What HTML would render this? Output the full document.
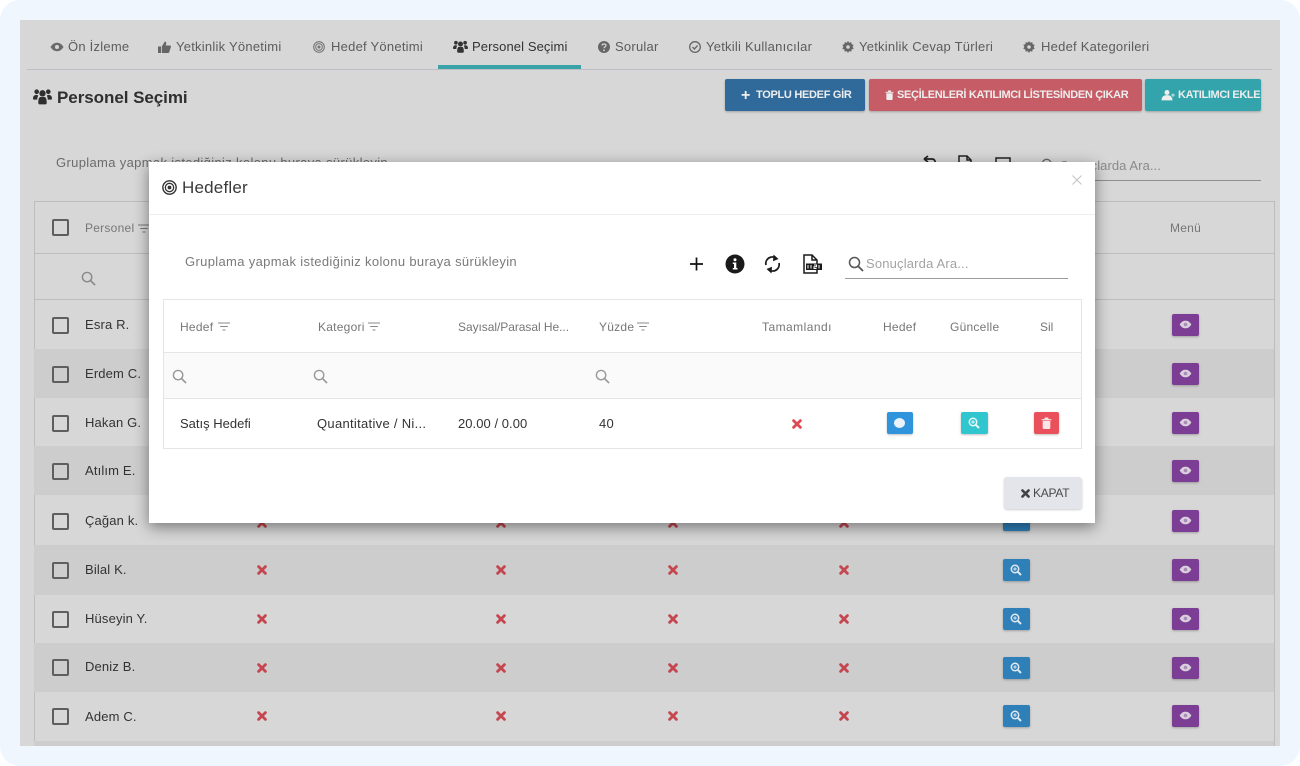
<!DOCTYPE html>
<html lang="tr"><head><meta charset="utf-8"><title>Hedefler</title>
<style>
*{box-sizing:border-box}
html,body{margin:0;padding:0;width:1300px;height:766px;overflow:hidden;background:#fff;font-family:"Liberation Sans",sans-serif}
.frame{position:absolute;left:0;top:0;width:1300px;height:766px;background:#eff6fe;border-radius:20px;overflow:hidden}
.app{position:absolute;left:20px;top:20px;width:1260px;height:726px;background:#d7d7d7;overflow:hidden}
.t{position:absolute;white-space:nowrap;line-height:16px}
.a{position:absolute}
svg.a{overflow:visible}
.tab{font-size:13px;color:#5c5c5c;letter-spacing:.24px}
.row{position:absolute;left:14px;width:1240px}
.cb{position:absolute;left:32px;width:17px;height:17px;border:2px solid #5e5e5e;border-radius:2px;background:transparent}
.nm{font-size:13px;color:#333;left:65px;letter-spacing:.15px}
.x{position:absolute;font-size:0;width:10px;height:10px}
.btn{position:absolute;height:32px;border-radius:2px;color:#eee;font-size:11px;font-weight:bold;line-height:33px;white-space:nowrap;box-shadow:0 1px 2px rgba(0,0,0,.25)}
.sq{position:absolute;width:27px;height:22px;border-radius:2px;box-shadow:0 1px 2px rgba(0,0,0,.25)}
.blue{background:#2f7fb8}.pur{background:#7c3e94}
.modal{position:absolute;left:149px;top:162px;width:946px;height:361px;background:#fff;box-shadow:0 4px 14px rgba(0,0,0,.45)}
.h{font-size:12px;color:#777;letter-spacing:.25px}
.c{font-size:13px;color:#333}
</style></head><body>
<svg width="0" height="0" style="position:absolute">
<defs>
<symbol id="x" viewBox="0 0 10 10"><path d="M1.600 1.600 8.400 8.400M8.400 1.600 1.600 8.400" stroke="currentColor" stroke-width="2.800" stroke-linecap="round" fill="none"/></symbol>
<symbol id="mag" viewBox="0 0 16 16"><circle cx="6.500" cy="6.500" r="5" fill="none" stroke="currentColor" stroke-width="1.500"/><path d="M10.200 10.200 15 15" stroke="currentColor" stroke-width="1.800" fill="none"/></symbol>
<symbol id="fil" viewBox="0 0 12 9"><path d="M0 1h12M2.200 4.500h7.600M4.500 8h3" stroke="currentColor" stroke-width="1.100" fill="none"/></symbol>
<symbol id="zoom" viewBox="0 0 12 12"><circle cx="5" cy="5" r="3.700" fill="none" stroke="currentColor" stroke-width="1.500"/><path d="M7.800 7.800 11 11" stroke="currentColor" stroke-width="2" fill="none"/><path d="M3.200 5h3.600M5 3.200v3.600" stroke="currentColor" stroke-width="1"/></symbol>
<symbol id="eye" viewBox="0 0 14 10"><path d="M.5 5C2.500 1.800 4.600 .8 7 .8S11.500 1.800 13.500 5C11.500 8.200 9.400 9.200 7 9.200S2.500 8.200 .5 5Z" fill="currentColor"/><circle cx="7" cy="5" r="2" style="fill:var(--p,#a98bb5)"/></symbol>
<symbol id="users" viewBox="0 0 18 15"><circle cx="3.500" cy="3" r="2.200" fill="currentColor"/><circle cx="14.500" cy="3" r="2.200" fill="currentColor"/><circle cx="9" cy="4.500" r="3" fill="currentColor"/><path d="M0 9.500C0 7 1.500 6 3.500 6L5 6.500C4.500 7.500 4 9 4 10.500H1C.4 10.500 0 10 0 9.500ZM18 9.500C18 7 16.500 6 14.500 6L13 6.500C13.500 7.500 14 9 14 10.500H17C17.600 10.500 18 10 18 9.500ZM5 13.500C5 9.500 6 8 7 8H11C12 8 13 9.500 13 13.500C13 14.400 12.400 15 11.500 15H6.500C5.600 15 5 14.400 5 13.500Z" fill="currentColor"/></symbol>
<symbol id="tgt" viewBox="0 0 14 14"><circle cx="7" cy="7" r="6.200" fill="none" stroke="currentColor" stroke-width="1.300"/><circle cx="7" cy="7" r="3.900" fill="none" stroke="currentColor" stroke-width="1.200"/><circle cx="7" cy="7" r="1.800" fill="currentColor"/></symbol>
<symbol id="gear" viewBox="0 0 12 12"><path d="M6 0 7.200 1.800 9.300 1.100 9.600 3.200 11.700 3.900 10.600 5.800 11.700 7.800 9.600 8.500 9.300 10.600 7.200 10.100 6 12 4.800 10.100 2.700 10.600 2.400 8.500.3 7.800 1.400 5.800.3 3.900 2.400 3.200 2.700 1.100 4.800 1.800Z" fill="currentColor"/><circle cx="6" cy="6" r="1.800" fill="#d7d7d7"/></symbol>
<symbol id="trash" viewBox="0 0 10 11"><path d="M.5 2h9v1H.5ZM3.500 .5h3l.5 1.500H3ZM1.500 3.500h7V10c0 .5-.4 1-1 1h-5c-.6 0-1-.5-1-1Z" fill="currentColor"/></symbol>
</defs></svg>
<div class="frame">
<div class="app">
<!-- tabs -->
<svg class="a" style="left:30px;top:22px;color:#6a6a6a;--p:#d7d7d7" width="14" height="10"><use href="#eye"/></svg>
<div class="t tab" style="left:48px;top:19px">Ön İzleme</div>
<svg class="a" style="left:138px;top:21px" width="13" height="12" viewBox="0 0 13 12"><path d="M0 5.500h3V12H0ZM3.800 5.500 6.500 1C7.600.2 8.500 1 8.200 2.500L7.700 4.500H12C13 4.500 13.200 5.500 12.800 6.200L11.200 11.300C11 11.800 10.600 12 10 12H3.800Z" fill="#666"/></svg>
<div class="t tab" style="left:156px;top:19px">Yetkinlik Yönetimi</div>
<svg class="a" style="left:293px;top:21px;color:#777" width="12" height="12"><use href="#tgt"/></svg>
<div class="t tab" style="left:311px;top:19px">Hedef Yönetimi</div>
<svg class="a" style="left:433px;top:20px;color:#333" width="15" height="13"><use href="#users"/></svg>
<div class="t tab" style="left:452px;top:19px;color:#333;letter-spacing:.1px">Personel Seçimi</div>
<svg class="a" style="left:578px;top:21px" width="12" height="12" viewBox="0 0 12 12"><circle cx="6" cy="6" r="6" fill="#666"/><path d="M4 4.500C4 2.500 8 2.500 8 4.500 8 6 6 5.800 6 7.300" stroke="#d7d7d7" stroke-width="1.200" fill="none"/><circle cx="6" cy="9.300" r=".9" fill="#d7d7d7"/></svg>
<div class="t tab" style="left:595px;top:19px">Sorular</div>
<svg class="a" style="left:669px;top:21px" width="12" height="12" viewBox="0 0 12 12"><circle cx="6" cy="6" r="5.300" fill="none" stroke="#666" stroke-width="1.300"/><path d="M3.500 6 5.400 8 8.600 4.500" fill="none" stroke="#666" stroke-width="1.300"/></svg>
<div class="t tab" style="left:686px;top:19px">Yetkili Kullanıcılar</div>
<svg class="a" style="left:822px;top:21px;color:#666" width="12" height="12"><use href="#gear"/></svg>
<div class="t tab" style="left:839px;top:19px">Yetkinlik Cevap Türleri</div>
<svg class="a" style="left:1003px;top:21px;color:#666" width="12" height="12"><use href="#gear"/></svg>
<div class="t tab" style="left:1021px;top:19px">Hedef Kategorileri</div>
<div class="a" style="left:7px;top:49px;width:1245px;height:1px;background:#bebec6"></div>
<div class="a" style="left:418px;top:45px;width:143px;height:4px;background:#3aa3a8"></div>
<!-- title -->
<svg class="a" style="left:13px;top:68px;color:#2f2f2f" width="19" height="17"><use href="#users"/></svg>
<div class="t" style="left:37px;top:69px;font-size:17px;font-weight:bold;color:#2f2f2f;line-height:18px;letter-spacing:-.05px">Personel Seçimi</div>
<!-- buttons -->
<div class="btn" style="left:705px;top:59px;width:140px;background:#306a9a;padding-left:31px;letter-spacing:-.3px"><span class="a" style="left:16px;top:0;font-size:16px">+</span>TOPLU HEDEF GİR</div>
<div class="btn" style="left:849px;top:59px;width:273px;background:#c65d66;padding-left:28px;letter-spacing:-.33px"><svg class="a" style="left:16px;top:11px;color:#eee" width="9" height="10"><use href="#trash"/></svg>SEÇİLENLERİ KATILIMCI LİSTESİNDEN ÇIKAR</div>
<div class="btn" style="left:1125px;top:59px;width:116px;background:#33a4ab;padding-left:33px;letter-spacing:-.35px"><svg class="a" style="left:17px;top:11px" width="13" height="10" viewBox="0 0 13 10"><circle cx="5" cy="2.500" r="2.500" fill="#eee"/><path d="M0 10C0 6.500 2 5.500 5 5.500S10 6.500 10 10ZM9 5h4M11 3.500v3.500" fill="#eee" stroke="#eee" stroke-width=".8"/></svg>KATILIMCI EKLE</div>
<!-- background toolbar -->
<div class="t" style="left:36px;top:135px;font-size:13px;color:#6b6b6b;letter-spacing:.34px">Gruplama yapmak istediğiniz kolonu buraya sürükleyin</div>
<svg class="a" style="left:903px;top:135px" width="14" height="14"><path d="M1 4 5 1M1 4 5 7M1 4H9C12 4 13 7 12 12" stroke="#222" stroke-width="1.700" fill="none"/></svg>
<svg class="a" style="left:938px;top:135px" width="14" height="14"><path d="M1 1H9L13 5V14H1ZM9 1V5H13" stroke="#222" stroke-width="1.500" fill="none"/></svg>
<svg class="a" style="left:975px;top:137px" width="16" height="12"><rect x="1" y="1" width="14" height="11" fill="none" stroke="#222" stroke-width="1.500"/></svg>
<svg class="a" style="left:1021px;top:138px;color:#666" width="14" height="14"><use href="#mag"/></svg>
<div class="t" style="left:1040px;top:138px;font-size:13px;color:#8a8a8a;letter-spacing:.07px">Sonuçlarda Ara...</div>
<div class="a" style="left:1014px;top:160px;width:227px;height:1px;background:#8f8f8f"></div>
<!-- table -->
<div class="a" style="left:14px;top:181px;width:1241px;height:560px;border:1px solid #bdbdbd;border-bottom:0"></div>
<div class="a" style="left:14px;top:233px;width:1241px;height:1px;background:#bdbdbd"></div>
<div class="a" style="left:14px;top:279px;width:1241px;height:1px;background:#bdbdbd"></div>
<div class="row" style="top:329px;height:49px;background:#cdcdcd"></div>
<div class="row" style="top:426px;height:49px;background:#cdcdcd"></div>
<div class="row" style="top:525px;height:50px;background:#cdcdcd"></div>
<div class="row" style="top:623px;height:49px;background:#cdcdcd"></div>
<div class="row" style="top:721px;height:5px;background:#cdcdcd"></div>

<div class="cb" style="top:199px"></div><div class="t" style="left:65px;top:200px;font-size:12px;color:#777;letter-spacing:.25px">Personel</div>
<svg class="a" style="left:118px;top:204px;color:#777" width="12" height="9"><use href="#fil"/></svg>
<div class="t" style="left:1150px;top:200px;font-size:12px;color:#777;letter-spacing:.25px">Menü</div>
<svg class="a" style="left:61px;top:251px;color:#888" width="15" height="15"><use href="#mag"/></svg>

<div class="cb" style="top:297px"></div><div class="t nm" style="top:297px">Esra R.</div>
<div class="cb" style="top:346px"></div><div class="t nm" style="top:346px">Erdem C.</div>
<div class="cb" style="top:395px"></div><div class="t nm" style="top:395px">Hakan G.</div>
<div class="cb" style="top:443px"></div><div class="t nm" style="top:443px">Atılım E.</div>
<div class="cb" style="top:493px"></div><div class="t nm" style="top:493px">Çağan k.</div>
<div class="cb" style="top:542px"></div><div class="t nm" style="top:542px">Bilal K.</div>
<div class="cb" style="top:591px"></div><div class="t nm" style="top:591px">Hüseyin Y.</div>
<div class="cb" style="top:639px"></div><div class="t nm" style="top:639px">Deniz B.</div>
<div class="cb" style="top:688px"></div><div class="t nm" style="top:689px">Adem C.</div>

<!-- red x marks -->
<svg class="x" style="left:237px;top:498px;color:#c5464f"><use href="#x"/></svg><svg class="x" style="left:476px;top:498px;color:#c5464f"><use href="#x"/></svg><svg class="x" style="left:648px;top:498px;color:#c5464f"><use href="#x"/></svg><svg class="x" style="left:819px;top:498px;color:#c5464f"><use href="#x"/></svg>
<svg class="x" style="left:237px;top:545px;color:#c5464f"><use href="#x"/></svg><svg class="x" style="left:476px;top:545px;color:#c5464f"><use href="#x"/></svg><svg class="x" style="left:648px;top:545px;color:#c5464f"><use href="#x"/></svg><svg class="x" style="left:819px;top:545px;color:#c5464f"><use href="#x"/></svg>
<svg class="x" style="left:237px;top:594px;color:#c5464f"><use href="#x"/></svg><svg class="x" style="left:476px;top:594px;color:#c5464f"><use href="#x"/></svg><svg class="x" style="left:648px;top:594px;color:#c5464f"><use href="#x"/></svg><svg class="x" style="left:819px;top:594px;color:#c5464f"><use href="#x"/></svg>
<svg class="x" style="left:237px;top:643px;color:#c5464f"><use href="#x"/></svg><svg class="x" style="left:476px;top:643px;color:#c5464f"><use href="#x"/></svg><svg class="x" style="left:648px;top:643px;color:#c5464f"><use href="#x"/></svg><svg class="x" style="left:819px;top:643px;color:#c5464f"><use href="#x"/></svg>
<svg class="x" style="left:237px;top:691px;color:#c5464f"><use href="#x"/></svg><svg class="x" style="left:476px;top:691px;color:#c5464f"><use href="#x"/></svg><svg class="x" style="left:648px;top:691px;color:#c5464f"><use href="#x"/></svg><svg class="x" style="left:819px;top:691px;color:#c5464f"><use href="#x"/></svg>

<!-- blue buttons -->
<div class="sq blue" style="left:983px;top:489px"></div>
<div class="sq blue" style="left:983px;top:539px"></div><svg class="a" style="left:990px;top:544px;color:#dfe9f0" width="12" height="12"><use href="#zoom"/></svg>
<div class="sq blue" style="left:983px;top:588px"></div><svg class="a" style="left:990px;top:593px;color:#dfe9f0" width="12" height="12"><use href="#zoom"/></svg>
<div class="sq blue" style="left:983px;top:637px"></div><svg class="a" style="left:990px;top:642px;color:#dfe9f0" width="12" height="12"><use href="#zoom"/></svg>
<div class="sq blue" style="left:983px;top:685px"></div><svg class="a" style="left:990px;top:690px;color:#dfe9f0" width="12" height="12"><use href="#zoom"/></svg>

<!-- purple buttons -->
<div class="sq pur" style="left:1152px;top:294px"></div><svg class="a" style="left:1159px;top:300px;color:#d9cfdd" width="13" height="9"><use href="#eye"/></svg>
<div class="sq pur" style="left:1152px;top:343px"></div><svg class="a" style="left:1159px;top:349px;color:#d9cfdd" width="13" height="9"><use href="#eye"/></svg>
<div class="sq pur" style="left:1152px;top:392px"></div><svg class="a" style="left:1159px;top:398px;color:#d9cfdd" width="13" height="9"><use href="#eye"/></svg>
<div class="sq pur" style="left:1152px;top:440px"></div><svg class="a" style="left:1159px;top:446px;color:#d9cfdd" width="13" height="9"><use href="#eye"/></svg>
<div class="sq pur" style="left:1152px;top:490px"></div><svg class="a" style="left:1159px;top:496px;color:#d9cfdd" width="13" height="9"><use href="#eye"/></svg>
<div class="sq pur" style="left:1152px;top:539px"></div><svg class="a" style="left:1159px;top:545px;color:#d9cfdd" width="13" height="9"><use href="#eye"/></svg>
<div class="sq pur" style="left:1152px;top:588px"></div><svg class="a" style="left:1159px;top:594px;color:#d9cfdd" width="13" height="9"><use href="#eye"/></svg>
<div class="sq pur" style="left:1152px;top:637px"></div><svg class="a" style="left:1159px;top:643px;color:#d9cfdd" width="13" height="9"><use href="#eye"/></svg>
<div class="sq pur" style="left:1152px;top:685px"></div><svg class="a" style="left:1159px;top:691px;color:#d9cfdd" width="13" height="9"><use href="#eye"/></svg>
</div>

<!-- modal -->
<div class="modal">
<svg class="a" style="left:13px;top:18px;color:#333" width="15" height="15"><use href="#tgt"/></svg>
<div class="t" style="left:33px;top:16px;font-size:17px;color:#3a3a3a;line-height:19px;letter-spacing:.2px">Hedefler</div>
<svg class="a" style="left:923px;top:13px" width="10" height="10"><path d="M.5.500 9.500 9.500M9.500.500 .5 9.500" stroke="#c4c4c4" stroke-width="1.100"/></svg>
<div class="a" style="left:0;top:52px;width:946px;height:1px;background:#eee"></div>
<div class="t" style="left:36px;top:92px;font-size:13px;color:#7a7a7a;letter-spacing:.34px">Gruplama yapmak istediğiniz kolonu buraya sürükleyin</div>
<svg class="a" style="left:540px;top:95px" width="15" height="14"><path d="M7.500 .5V13.500M1 7H14" stroke="#111" stroke-width="1.700"/></svg>
<svg class="a" style="left:576px;top:92px" width="20" height="20" viewBox="0 0 20 20"><circle cx="10" cy="10" r="9.500" fill="#1a1a1a"/><circle cx="10" cy="5.700" r="1.500" fill="#fff"/><path d="M7.800 8.500H11.300V14H12.500V15.500H7.800V14H9V10H7.800Z" fill="#fff"/></svg>
<svg class="a" style="left:615px;top:92px" width="17" height="20" viewBox="0 0 17 20"><path d="M2 11A6.500 6.500 0 0 1 12.500 4.500M15 9A6.500 6.500 0 0 1 4.500 15.500" fill="none" stroke="#1a1a1a" stroke-width="1.800"/><path d="M9.500 0.500 14.500 5 9 7.200ZM7.500 19.500 2.500 15 8 12.800Z" fill="#1a1a1a"/></svg>
<svg class="a" style="left:654px;top:92px" width="19" height="20" viewBox="0 0 19 20"><path d="M1 1H9L14 6V19H1Z M9 1V6H14" fill="none" stroke="#1a1a1a" stroke-width="1.500"/><rect x="3" y="9.500" width="16" height="6.500" fill="#1a1a1a"/><path d="M5 11v3.500M8 11v3.500M11 11h2.500v1.700H11v1.800h2.500M16 11v3.500" stroke="#fff" stroke-width="1" fill="none"/></svg>
<svg class="a" style="left:699px;top:94px;color:#555" width="16" height="16"><use href="#mag"/></svg>
<div class="t" style="left:717px;top:94px;font-size:13px;color:#a3a3a3;letter-spacing:.17px">Sonuçlarda Ara...</div>
<div class="a" style="left:696px;top:116px;width:223px;height:1px;background:#9b9b9b"></div>

<div class="a" style="left:14px;top:137px;width:919px;height:150px;border:1px solid #e5e5e5"></div>
<div class="a" style="left:15px;top:190px;width:917px;height:47px;background:#fafafa;border-top:1px solid #e5e5e5;border-bottom:1px solid #e5e5e5"></div>

<div class="t h" style="left:31px;top:157px">Hedef</div><svg class="a" style="left:69px;top:160px;color:#888" width="12" height="9"><use href="#fil"/></svg>
<div class="t h" style="left:169px;top:157px">Kategori</div><svg class="a" style="left:219px;top:160px;color:#888" width="12" height="9"><use href="#fil"/></svg>
<div class="t h" style="left:309px;top:157px;letter-spacing:-.05px">Sayısal/Parasal He...</div>
<div class="t h" style="left:450px;top:157px">Yüzde</div><svg class="a" style="left:488px;top:160px;color:#888" width="12" height="9"><use href="#fil"/></svg>
<div class="t h" style="left:613px;top:157px;letter-spacing:.45px">Tamamlandı</div>
<div class="t h" style="left:734px;top:157px">Hedef</div>
<div class="t h" style="left:801px;top:157px">Güncelle</div>
<div class="t h" style="left:891px;top:157px;letter-spacing:0">Sil</div>

<svg class="a" style="left:23px;top:207px;color:#999" width="15" height="15"><use href="#mag"/></svg>
<svg class="a" style="left:164px;top:207px;color:#999" width="15" height="15"><use href="#mag"/></svg>
<svg class="a" style="left:446px;top:207px;color:#999" width="15" height="15"><use href="#mag"/></svg>

<div class="t c" style="left:31px;top:254px">Satış Hedefi</div>
<div class="t c" style="left:168px;top:254px;letter-spacing:.3px">Quantitative / Ni...</div>
<div class="t c" style="left:309px;top:254px;letter-spacing:.05px">20.00 / 0.00</div>
<div class="t c" style="left:450px;top:254px;letter-spacing:.25px">40</div>
<svg class="a" style="left:643px;top:257px;color:#dc4a55" width="10" height="10" viewBox="0 0 10 10"><use href="#x"/></svg>
<div class="sq" style="left:738px;top:250px;width:26px;background:#2f94dc"></div><div class="a" style="left:745px;top:256px;width:11px;height:10px;border-radius:50%;background:#e8f3fb"></div>
<div class="sq" style="left:812px;top:250px;background:#2fc6cf"></div><svg class="a" style="left:819px;top:255px;color:#e8fafa" width="12" height="12"><use href="#zoom"/></svg>
<div class="sq" style="left:885px;top:250px;width:25px;background:#e9505c"></div><svg class="a" style="left:892px;top:255px;color:#f9e5e6" width="11" height="12"><use href="#trash"/></svg>

<div class="a" style="left:855px;top:315px;width:78px;height:32px;background:#e3e5ea;border-radius:3px;box-shadow:0 1px 2px rgba(0,0,0,.2)"></div>
<svg class="a" style="left:872px;top:327px;color:#444" width="9" height="9"><use href="#x"/></svg>
<div class="t" style="left:884px;top:323px;font-size:12px;color:#4a4a4a;letter-spacing:-.25px">KAPAT</div>
</div>
</div>
</body></html>
